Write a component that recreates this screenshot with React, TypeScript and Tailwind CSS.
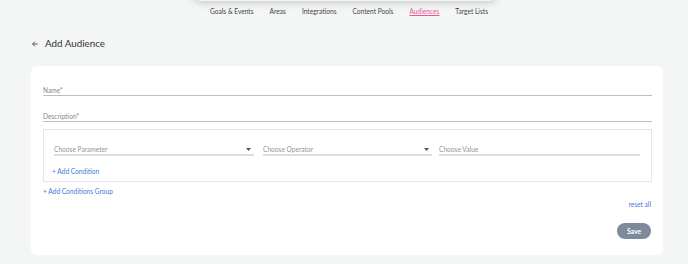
import React from "react";

function Caret() {
  return (
    <svg width="5" height="3" viewBox="0 0 5 3" className="shrink-0">
      <path d="M0 0 L5 0 L2.5 3 Z" fill="#555" />
    </svg>
  );
}

function SelectField({ label, caret, className }: { label: string; caret?: boolean; className: string }) {
  return (
    <div className={`flex items-start justify-between border-b-2 border-[#dedede] h-[10px] ${className}`}>
      <span className="text-[6.6px] text-[#959595] leading-[7px]">{label}</span>
      {caret && (
        <span className="mr-[3px] mt-[2px] flex">
          <Caret />
        </span>
      )}
    </div>
  );
}

export default function App() {
  const nav = ["Goals & Events", "Areas", "Integrations", "Content Pools", "Audiences", "Target Lists"];
  return (
    <div
      className="relative w-[688px] h-[264px] bg-[#f4f6f6] overflow-hidden"
      style={{ fontFamily: "Lato, 'Open Sans', sans-serif" }}
    >
      <div className="absolute left-[192px] top-[-20px] w-[306px] h-[21px] bg-[#f4f6f6] shadow-[0_1px_8px_rgba(0,0,0,0.22)] rounded-b-[10px]" />
      <div className="relative flex items-center gap-[16px] pl-[210px] h-[22px]">
        {nav.map((n) => (
          <span
            key={n}
            className={`text-[6.6px] leading-[7px] ${
              n === "Audiences" ? "text-[#e8579b] underline" : "text-[#444]"
            }`}
          >
            {n}
          </span>
        ))}
      </div>
      <div className="flex items-center gap-[7px] pl-[32px] mt-[16px] h-[12px]">
        <svg width="6" height="6" viewBox="0 0 6 6">
          <path d="M5.8 3 H0.6 M2.9 0.6 L0.6 3 L2.9 5.4" stroke="#444" strokeWidth="0.9" fill="none" />
        </svg>
        <span className="text-[9.8px] text-[#333] leading-none">Add Audience</span>
      </div>
      <div className="mx-[31px] mt-[16px] w-[632px] h-[189px] bg-white rounded-[6px] pl-[12px] pr-[11px] pt-[21px]">
        <div className="border-b border-[#bdbdbd] h-[9px] text-[6.6px] text-[#888] leading-[7px]">
          Name<span className="text-[#d9534f]">*</span>
        </div>
        <div className="border-b border-[#bdbdbd] h-[9px] mt-[17px] text-[6.6px] text-[#888] leading-[7px]">
          Description<span className="text-[#d9534f]">*</span>
        </div>
        <div className="mt-[7px] border border-[#e6e6e6] h-[53px] pl-[10px] pt-[16px]">
          <div className="flex">
            <SelectField label="Choose Parameter" caret className="w-[200px]" />
            <SelectField label="Choose Operator" caret className="w-[169px] ml-[9px]" />
            <SelectField label="Choose Value" className="w-[201px] ml-[7px]" />
          </div>
          <div className="mt-[12px] -ml-[2px] text-[6.6px] text-[#3d7be0] leading-[7px]">+ Add Condition</div>
        </div>
        <div className="mt-[6px] text-[6.6px] text-[#3d7be0] leading-[7px]">+ Add Conditions Group</div>
        <div className="flex flex-col items-end">
          <span className="mt-[6px] mr-[1px] text-[6.6px] text-[#3d7be0] leading-[7px]">reset all</span>
          <button className="mt-[15px] mr-[1px] w-[34px] h-[16px] rounded-full bg-[#7d8a9b] text-white text-[6.8px] font-bold leading-none">
            Save
          </button>
        </div>
      </div>
    </div>
  );
}
